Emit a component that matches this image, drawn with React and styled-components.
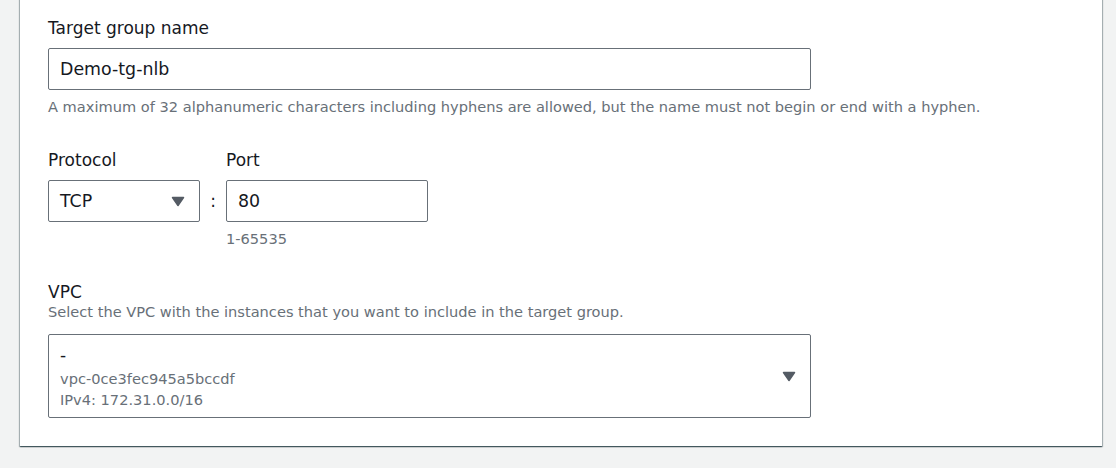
import React from 'react';
import styled, { createGlobalStyle } from 'styled-components';

const GlobalStyle = createGlobalStyle`
  html, body {
    margin: 0;
    padding: 0;
    background: #f2f3f3;
  }
  body {
    font-family: "DejaVu Sans", "Liberation Sans", sans-serif;
    color: #16191f;
  }
`

const Page = styled.div`
  width: 1116px;
  height: 468px;
  overflow: hidden;
  padding: 0 14px 0 20px;
  box-sizing: border-box;
`

const Card = styled.div`
  background: #ffffff;
  margin-top: -10px;
  padding: 27px 28px 28px;
  box-shadow: 0 1px 1px 0 rgba(0, 28, 36, 0.5), 1px 1px 1px 0 rgba(0, 28, 36, 0.25), -1px 1px 1px 0 rgba(0, 28, 36, 0.25);
  display: flex;
  flex-direction: column;
  gap: 32px;
`

const Field = styled.div`
  display: flex;
  flex-direction: column;
  align-items: flex-start;
`

const Label = styled.div`
  font-size: 17px;
  line-height: 22px;
  margin-bottom: ${p => p.gap ?? 9}px;
`

const Hint = styled.div`
  font-size: 14.6px;
  line-height: 20px;
  color: #687078;
  margin-top: ${p => p.top || 0}px;
  margin-bottom: ${p => p.bottom || 0}px;
`

const Box = styled.div`
  width: ${p => p.w}px;
  height: ${p => p.h || 42}px;
  box-sizing: border-box;
  border: 1px solid #687078;
  border-radius: 2px;
  display: flex;
  align-items: center;
  justify-content: space-between;
  padding: 0 14px 0 11px;
  font-size: 17.4px;
  background: #ffffff;
`

const PortGrid = styled.div`
  display: grid;
  grid-template-columns: 152px 26px 202px;
  align-items: start;
`

const Colon = styled.div`
  height: 42px;
  display: flex;
  align-items: center;
  justify-content: center;
  font-size: 17px;
`

const Options = styled.div`
  display: flex;
  flex-direction: column;
`

const Dash = styled.div`
  font-size: 17px;
  line-height: 22px;
  margin-bottom: 3px;
  padding-top: 2px;
`

const Sub = styled.div`
  font-size: 14.6px;
  line-height: 20.4px;
  color: #687078;
`

const Arrow = () => (
  <svg width="14" height="11" viewBox="0 0 14 11">
    <path d="M1.5 1.5 L12.5 1.5 L7 9.5 Z" fill="#545b64" stroke="#545b64" strokeWidth="1.5" strokeLinejoin="round" />
  </svg>
)

export default function App() {
  return (
    <>
      <GlobalStyle />
      <Page>
        <Card>
          <Field>
            <Label>Target group name</Label>
            <Box w={763}>Demo-tg-nlb</Box>
            <Hint top={7}>A maximum of 32 alphanumeric characters including hyphens are allowed, but the name must not begin or end with a hyphen.</Hint>
          </Field>
          <PortGrid>
            <Label>Protocol</Label>
            <div />
            <Label>Port</Label>
            <Box w={152}>TCP<Arrow /></Box>
            <Colon>:</Colon>
            <Box w={202}>80</Box>
            <div />
            <div />
            <Hint top={7}>1-65535</Hint>
          </PortGrid>
          <Field>
            <Label gap={0}>VPC</Label>
            <Hint top={-1} bottom={12}>Select the VPC with the instances that you want to include in the target group.</Hint>
            <Box w={763} h={84}>
              <Options>
                <Dash>-</Dash>
                <Sub>vpc-0ce3fec945a5bccdf</Sub>
                <Sub>IPv4: 172.31.0.0/16</Sub>
              </Options>
              <Arrow />
            </Box>
          </Field>
        </Card>
      </Page>
    </>
  );
}
